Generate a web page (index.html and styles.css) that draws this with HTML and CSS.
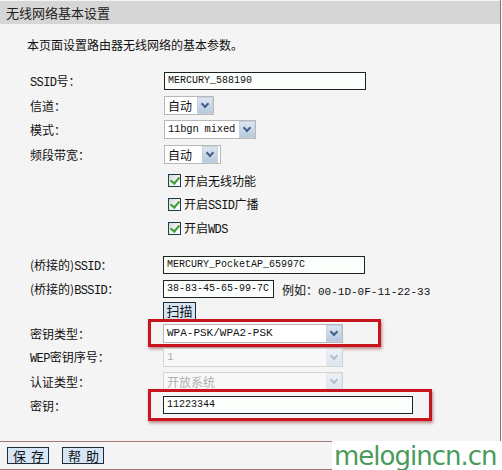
FILE: index.html
```html
<!DOCTYPE html>
<html lang="zh-CN">
<head>
  <meta charset="UTF-8">
  <title>无线网络基本设置</title>
  <link rel="stylesheet" href="styles.css">
</head>
<body>
  <div class="panel">
    <div class="head">无线网络基本设置</div>
    <div class="content">
      <p class="intro">本页面设置路由器无线网络的基本参数。</p>

      <div class="row">
        <span class="label"><span class="mono">SSID</span>号：</span>
        <span class="input w-ssid">MERCURY_588190</span>
      </div>
      <div class="row">
        <span class="label">信道：</span>
        <span class="select w-ch"><span class="val cjk">自动</span><span class="arrow"></span></span>
      </div>
      <div class="row">
        <span class="label">模式：</span>
        <span class="select w-mode"><span class="val">11bgn mixed</span><span class="arrow"></span></span>
      </div>
      <div class="row row-tall">
        <span class="label">频段带宽：</span>
        <span class="select w-bw"><span class="val cjk">自动</span><span class="arrow"></span></span>
      </div>
      <div class="row check-row">
        <span class="check"></span><span class="check-text">开启无线功能</span>
      </div>
      <div class="row check-row">
        <span class="check"></span><span class="check-text">开启<span class="mono">SSID</span>广播</span>
      </div>
      <div class="row check-row">
        <span class="check"></span><span class="check-text">开启<span class="mono">WDS</span></span>
      </div>

      <div class="row gap-top">
        <span class="label">(桥接的)<span class="mono">SSID</span>：</span>
        <span class="input w-bssid-name">MERCURY_PocketAP_65997C</span>
      </div>
      <div class="row">
        <span class="label">(桥接的)<span class="mono">BSSID</span>：</span>
        <span class="input w-mac">38-83-45-65-99-7C</span>
        <span class="hint">例如：<span class="mono">00-1D-0F-11-22-33</span></span>
      </div>
      <div class="row row-short">
        <span class="label"></span>
        <span class="btn btn-scan">扫描</span>
      </div>
      <div class="row">
        <span class="label">密钥类型：</span>
        <span class="select w-key"><span class="val">WPA-PSK/WPA2-PSK</span><span class="arrow"></span></span>
        <span class="mark mark-type"></span>
      </div>
      <div class="row">
        <span class="label"><span class="mono">WEP</span>密钥序号：</span>
        <span class="select w-key disabled"><span class="val">1</span><span class="arrow"></span></span>
      </div>
      <div class="row">
        <span class="label">认证类型：</span>
        <span class="select w-key disabled"><span class="val cjk">开放系统</span><span class="arrow"></span></span>
      </div>
      <div class="row">
        <span class="label">密钥：</span>
        <span class="input w-pass">11223344</span>
        <span class="mark mark-pass"></span>
      </div>
    </div>

    <div class="foot">
      <span class="btn btn-foot">保存</span>
      <span class="btn btn-foot">帮助</span>
      <span class="brand">melogincn.cn</span>
    </div>
  </div>
</body>
</html>
```

FILE: styles.css
```css
* {
  margin: 0;
  padding: 0;
  box-sizing: border-box;
}
body {
  width: 502px;
  height: 470px;
  background: #fff;
  font-family: 'Noto Sans CJK SC', sans-serif;
  font-size: 12px;
  color: #111;
  overflow: hidden;
}
.panel {
  width: 501px;
  height: 470px;
  background: #f4f4f4;
  border-right: 1px solid #9a6a6a;
  padding-top: 1px;
  display: flex;
  flex-direction: column;
}
.head {
  height: 23px;
  line-height: 23px;
  padding-left: 6px;
  background: #d6d6d6;
  font-size: 13px;
  color: #222;
}
.content {
  height: 416px;
  padding-left: 30px;
}
.intro {
  margin: 13px 0 0 -3px;
  height: 32px;
  line-height: 16px;
  font-size: 12px;
}
.mono {
  font-family: 'Liberation Mono', 'DejaVu Sans Mono', monospace;
  font-size: 11px;
}
.row {
  position: relative;
  height: 24px;
  display: flex;
  align-items: center;
}
.row-tall {
  height: 27px;
}
.row-short {
  height: 20px;
}
.gap-top {
  margin-top: 13px;
}
.label {
  width: 133px;
  flex-shrink: 0;
}
.label .mono {
  font-size: 12px;
  letter-spacing: -0.6px;
}
.input {
  height: 18px;
  line-height: 16px;
  padding-left: 3px;
  border: 1px solid #1c2424;
  background: #fcfefc;
  font-family: 'Liberation Mono', 'DejaVu Sans Mono', monospace;
  font-size: 10px;
  color: #111;
  white-space: nowrap;
}
.w-ssid { width: 202px; margin-left: 1px; }
.w-bssid-name { width: 202px; }
.w-mac { width: 111px; }
.w-pass { width: 250px; }
.hint {
  margin-left: 8px;
}
.hint .mono {
  font-size: 11px;
}
.select {
  height: 19px;
  display: flex;
  align-items: center;
  justify-content: space-between;
  border: 1px solid #b8b8b8;
  background: #fff;
  padding-left: 3px;
  margin-left: 1px;
}
.select .val {
  font-family: 'Liberation Mono', 'DejaVu Sans Mono', monospace;
  font-size: 11px;
  white-space: nowrap;
}
.w-mode .val {
  font-size: 10.5px;
  letter-spacing: -0.2px;
}
.select .val.cjk {
  font-family: 'Noto Sans CJK SC', sans-serif;
  font-size: 12px;
}
.arrow {
  flex-shrink: 0;
  width: 16px;
  height: 17px;
  border: 1px solid #c6d2de;
  background: linear-gradient(#dbe6f2, #b7c9dd);
  position: relative;
}
.arrow::after {
  content: '';
  position: absolute;
  left: 4px;
  top: 3px;
  width: 4px;
  height: 4px;
  border-right: 2px solid #42608a;
  border-bottom: 2px solid #42608a;
  transform: rotate(45deg);
}
.w-ch { width: 50px; }
.w-mode { width: 92px; }
.w-bw { width: 57px; padding-right: 2px; background: #fff; }
.w-key { width: 180px; margin-left: 0; }
.select.disabled {
  border-color: #d4d4d4;
  background: #f8f8f8;
}
.select.disabled .val {
  color: #b0b0b0;
}
.select.disabled .arrow {
  border-color: #e4e8ee;
  background: linear-gradient(#eef2f7, #dde5ee);
}
.select.disabled .arrow::after {
  border-color: #b4c2d4;
}
.check-row {
  padding-left: 138px;
}
.check {
  width: 13px;
  height: 13px;
  border: 1px solid #1c3a54;
  background: linear-gradient(135deg, #dcdcd6, #fff);
  position: relative;
  margin-right: 3px;
}
.check::after {
  content: '';
  position: absolute;
  left: 3px;
  top: 0;
  width: 4px;
  height: 7px;
  border-right: 2px solid #3aa13a;
  border-bottom: 2px solid #3aa13a;
  transform: rotate(40deg);
}
.check-text {
  font-size: 12px;
}
.check-text .mono {
  font-size: 12px;
  letter-spacing: -0.6px;
}
.btn {
  display: inline-block;
  border: 1px solid #1e2c38;
  background: #d6e6f6;
  text-align: center;
  color: #111;
  white-space: nowrap;
}
.btn-scan {
  width: 33px;
  height: 18px;
  line-height: 16px;
  font-size: 13px;
}
.mark {
  position: absolute;
  border: 3px solid #c8141c;
  box-shadow: 1px 2px 3px rgba(120, 0, 0, 0.45);
  pointer-events: none;
}
.mark-type {
  left: 118px;
  top: -2px;
  width: 233px;
  height: 28px;
}
.mark-pass {
  left: 118px;
  top: -4px;
  width: 284px;
  height: 32px;
}
.foot {
  position: relative;
  height: 29px;
  margin-top: 7px;
  border-top: 1px solid #a87878;
  border-bottom: 1px solid #a87878;
  display: flex;
  align-items: center;
  gap: 13px;
  padding-left: 7px;
}
.btn-foot {
  width: 42px;
  height: 17px;
  line-height: 15px;
  font-size: 13px;
  letter-spacing: 5px;
  text-indent: 5px;
}
.brand {
  position: absolute;
  right: -1px;
  top: -1px;
  width: 169px;
  height: 31px;
  background: #fff;
  color: #4a9a5c;
  font-family: 'DejaVu Sans', sans-serif;
  font-size: 26px;
  line-height: 30px;
  letter-spacing: -1px;
  padding-left: 2px;
}
```
